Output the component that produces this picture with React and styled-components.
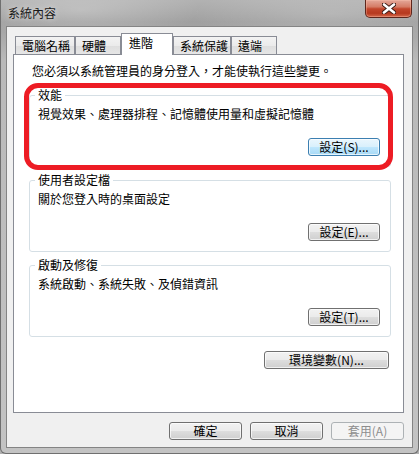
import React from 'react';
import styled, { createGlobalStyle } from 'styled-components';

const Global = createGlobalStyle`
  html, body { margin: 0; padding: 0; background: #b0b0b0; }
  * { box-sizing: border-box; }
  body {
    font-family: "Noto Sans CJK TC", "Liberation Sans", sans-serif;
    font-size: 12px;
    color: #000;
  }
`;

const Window = styled.div`
  width: 419px;
  height: 454px;
  display: flex;
  flex-direction: column;
  border: 1px solid #6f6f6f;
  border-top: none;
  border-radius: 0 0 6px 6px;
  overflow: hidden;
  background:
    radial-gradient(ellipse 120px 30px at 80px 10px, rgba(255,255,255,0.25), transparent),
    radial-gradient(ellipse 140px 30px at 330px 14px, rgba(255,255,255,0.18), transparent),
    linear-gradient(180deg, #b2b2b2 0%, #a0a0a0 22px, #b9b9b9 60px, #c3c3c3 100%);
`;

const TitleBar = styled.div`
  height: 26px;
  flex: none;
  display: flex;
  justify-content: space-between;
  align-items: flex-start;
  padding-left: 7px;
`;

const Title = styled.span`
  line-height: 26px;
  color: #1a1a1a;
  text-shadow: 0 0 6px rgba(255,255,255,0.7);
`;

const CloseBtn = styled.div`
  width: 47px;
  height: 18px;
  margin-right: 6px;
  display: flex;
  align-items: center;
  justify-content: center;
  border: 1px solid #5e261c;
  border-top: none;
  border-radius: 0 0 5px 5px;
  background: linear-gradient(180deg, #e4a899 0%, #d57c66 40%, #c2462c 52%, #b6391f 78%, #d4684a 100%);
  box-shadow: inset 0 0 0 1px rgba(255,200,180,0.35);
`;

const Body = styled.div`
  flex: 1;
  margin: 0 5px 5px;
  border: 1px solid #848484;
  background: #f0f0f0;
  display: flex;
  flex-direction: column;
  padding: 6px 8px 7px 6px;
`;

const TabStrip = styled.div`
  display: flex;
  align-items: flex-end;
  height: 21px;
  padding-left: 2px;
  flex: none;
`;

const Tab = styled.div`
  position: relative;
  z-index: 1;
  width: ${p => p.$w}px;
  height: ${p => (p.$active ? 22 : 18)}px;
  margin-bottom: ${p => (p.$active ? -1 : 0)}px;
  padding: ${p => (p.$active ? '1px 0 0 7px' : '1px 0 0 6px')};
  line-height: 15px;
  border: 1px solid #898c95;
  border-bottom: none;
  white-space: nowrap;
  background: ${p => (p.$active ? '#fff' : 'linear-gradient(180deg, #f3f3f3 0%, #ebebeb 50%, #dedede 51%, #e6e6e6 100%)')};
`;

const Panel = styled.div`
  flex: 1;
  background: #fff;
  border: 1px solid #898c95;
  padding: 9px 12px 0 15px;
  display: flex;
  flex-direction: column;
`;

const Note = styled.div`
  margin-left: 3px;
  line-height: 14px;
`;

const Highlight = styled.div`
  position: relative;
  margin-top: ${p => p.$top}px;
`;

const RedRing = styled.div`
  position: absolute;
  top: -5px;
  left: -5px;
  right: -2px;
  bottom: -3px;
  border: 5px solid #ed1c24;
  border-radius: 14px;
  pointer-events: none;
`;

const Group = styled.fieldset`
  margin: ${p => p.$top || 0}px 0 0;
  padding: 5px 10px 10px 8px;
  border: 1px solid #d5dfe5;
  border-radius: 3px;
  min-width: 0;
`;

const Legend = styled.legend`
  padding: 0 3px;
  margin-left: -3px;
  line-height: 14px;
`;

const Line = styled.div`
  line-height: 14px;
`;

const ButtonRow = styled.div`
  display: flex;
  justify-content: flex-end;
  gap: 8px;
  margin-top: ${p => p.$top}px;
  margin-right: ${p => p.$right || 0}px;
`;

const Button = styled.div`
  width: ${p => p.$w || 72}px;
  height: 18px;
  display: flex;
  align-items: center;
  justify-content: center;
  border: 1px solid #707070;
  border-radius: 3px;
  font-size: 12px;
  line-height: 14px;
  color: #000;
  background: linear-gradient(180deg, #f2f2f2 0%, #ebebeb 48%, #dddddd 52%, #cfcfcf 100%);
  box-shadow: inset 0 0 0 1px rgba(255,255,255,0.7);
  ${p => p.$default && `
    border-color: #3c7fb1;
    background: linear-gradient(180deg, #eaf6fd 0%, #d9f0fc 48%, #bee6fd 52%, #a7d9f5 100%);
  `}
  ${p => p.$disabled && `
    border-color: #adb2b5;
    color: #8d8d8d;
    background: #f4f4f4;
    box-shadow: none;
  `}
`;

const Footer = styled.div`
  display: flex;
  justify-content: flex-end;
  gap: 8px;
  margin-top: 9px;
  flex: none;
`;

const tabs = [
  { label: '電腦名稱', w: 60 },
  { label: '硬體', w: 46 },
  { label: '進階', w: 52, active: true },
  { label: '系統保護', w: 58 },
  { label: '遠端', w: 46 },
];

function CloseIcon() {
  return (
    <svg width="14" height="11" viewBox="0 0 14 11">
      <path d="M2 1.5 L12 9.5 M12 1.5 L2 9.5" stroke="#3a1a14" strokeWidth="4.4" strokeLinecap="round" />
      <path d="M2 1.5 L12 9.5 M12 1.5 L2 9.5" stroke="#fff" strokeWidth="2.6" strokeLinecap="round" />
    </svg>
  );
}

export default function App() {
  return (
    <>
      <Global />
      <Window>
        <TitleBar>
          <Title>系統內容</Title>
          <CloseBtn><CloseIcon /></CloseBtn>
        </TitleBar>
        <Body>
          <TabStrip>
            {tabs.map(t => (
              <Tab key={t.label} $w={t.w} $active={t.active}>{t.label}</Tab>
            ))}
          </TabStrip>
          <Panel>
            <Note>您必須以系統管理員的身分登入，才能使執行這些變更。</Note>
            <Highlight $top={10}>
              <Group>
                <Legend>效能</Legend>
                <Line>視覺效果、處理器排程、記憶體使用量和虛擬記憶體</Line>
                <ButtonRow $top={17}>
                  <Button $default>設定(S)...</Button>
                </ButtonRow>
              </Group>
              <RedRing />
            </Highlight>
            <Group $top={6}>
              <Legend>使用者設定檔</Legend>
              <Line>關於您登入時的桌面設定</Line>
              <ButtonRow $top={17}>
                <Button>設定(E)...</Button>
              </ButtonRow>
            </Group>
            <Group $top={6}>
              <Legend>啟動及修復</Legend>
              <Line>系統啟動、系統失敗、及偵錯資訊</Line>
              <ButtonRow $top={17}>
                <Button>設定(T)...</Button>
              </ButtonRow>
            </Group>
            <ButtonRow $top={14} $right={2}>
              <Button $w={125}>環境變數(N)...</Button>
            </ButtonRow>
          </Panel>
          <Footer>
            <Button $w={73}>確定</Button>
            <Button $w={73}>取消</Button>
            <Button $w={73} $disabled>套用(A)</Button>
          </Footer>
        </Body>
      </Window>
    </>
  );
}
